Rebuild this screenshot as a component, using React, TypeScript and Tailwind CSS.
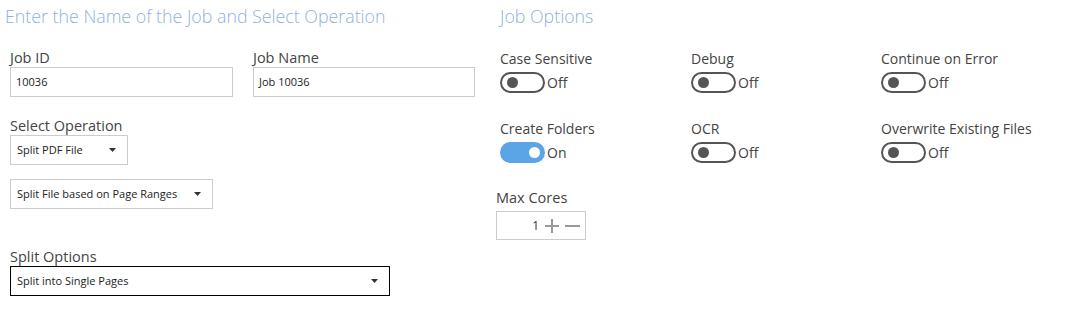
import React from "react";

const font = { fontFamily: '"Open Sans", "Noto Sans", sans-serif' };

function Toggle({ on }: { on?: boolean }) {
  return (
    <div className="flex items-center">
      {on ? (
        <div className="w-[45px] h-[21px] rounded-full bg-[#5ba5e6] flex items-center justify-end pr-[5px]">
          <div className="w-[11px] h-[11px] rounded-full bg-white" />
        </div>
      ) : (
        <div className="w-[45px] h-[21px] rounded-full border-2 border-[#555] flex items-center pl-[5px]">
          <div className="w-[11px] h-[11px] rounded-full bg-[#555]" />
        </div>
      )}
      <span className="text-[14px] text-[#444] ml-[2px] leading-none">{on ? "On" : "Off"}</span>
    </div>
  );
}

function Caret() {
  return (
    <svg width="7" height="4" viewBox="0 0 7 4" className="shrink-0">
      <path d="M0 0 L7 0 L3.5 4 Z" fill="#333" />
    </svg>
  );
}

function Select({ text, w, dark }: { text: string; w: string; dark?: boolean }) {
  return (
    <div
      className={`${w} h-[30px] border ${dark ? "border-black" : "border-[#ccc]"} flex items-center justify-between pl-[6px] pr-[11px] text-[11px] text-[#222]`}
    >
      <span>{text}</span>
      <Caret />
    </div>
  );
}

function Opt({ label, on }: { label: string; on?: boolean }) {
  return (
    <div className="flex flex-col">
      <div className="text-[14px] text-[#444] leading-[20px] h-[20px] whitespace-nowrap">{label}</div>
      <div className="mt-[3px]">
        <Toggle on={on} />
      </div>
    </div>
  );
}

export default function App() {
  return (
    <div className="w-[1067px] h-[315px] bg-white flex overflow-hidden" style={font}>
      <div className="w-[495px] shrink-0 pl-[5px] pt-[3px]">
        <div className="text-[17.8px] text-[#8fb1dc] leading-[26px] font-light whitespace-nowrap">
          Enter the Name of the Job and Select Operation
        </div>
        <div className="pl-[5px]">
          <div className="flex gap-[20px] mt-[19px]">
            <div>
              <div className="text-[14.5px] text-[#444] leading-[20px]">Job ID</div>
              <div className="w-[223px] h-[30px] mt-[-1px] border border-[#ccc] flex items-center pl-[5px] text-[11px] text-[#222]">
                10036
              </div>
            </div>
            <div>
              <div className="text-[14.5px] text-[#444] leading-[20px]">Job Name</div>
              <div className="w-[222px] h-[30px] mt-[-1px] border border-[#ccc] flex items-center pl-[5px] text-[11px] text-[#222]">
                Job 10036
              </div>
            </div>
          </div>
          <div className="mt-[19px] text-[14.5px] text-[#444] leading-[20px]">Select Operation</div>
          <div className="mt-[-1px]">
            <Select text="Split PDF File" w="w-[118px]" />
          </div>
          <div className="mt-[14px]">
            <Select text="Split File based on Page Ranges" w="w-[203px]" />
          </div>
          <div className="mt-[38px] text-[14.5px] text-[#444] leading-[20px]">Split Options</div>
          <div className="mt-[-1px]">
            <Select text="Split into Single Pages" w="w-[380px]" dark />
          </div>
        </div>
      </div>
      <div className="flex-1 min-w-0 pt-[3px]">
        <div className="pl-[5px] text-[17.8px] text-[#8fb1dc] leading-[26px] font-light">Job Options</div>
        <div className="pl-[5px] grid grid-cols-[191px_190px_170px] gap-y-[26px] mt-[20px]">
          <Opt label="Case Sensitive" />
          <Opt label="Debug" />
          <Opt label="Continue on Error" />
          <Opt label="Create Folders" on />
          <Opt label="OCR" />
          <Opt label="Overwrite Existing Files" />
        </div>
        <div className="mt-[25px] pl-[1px]">
          <div className="text-[14.5px] text-[#444] leading-[20px]">Max Cores</div>
          <div className="w-[90px] h-[29px] mt-[3px] border border-[#ccc] flex items-center justify-end pr-[4px]">
            <span className="text-[12px] text-[#333] mr-[5px]">1</span>
            <svg width="16" height="16" viewBox="0 0 16 16" className="mr-[4px]">
              <path d="M8 1 V15 M1 8 H15" stroke="#999" strokeWidth="2" />
            </svg>
            <svg width="17" height="16" viewBox="0 0 17 16">
              <path d="M1 8 H16" stroke="#999" strokeWidth="2" />
            </svg>
          </div>
        </div>
      </div>
    </div>
  );
}
